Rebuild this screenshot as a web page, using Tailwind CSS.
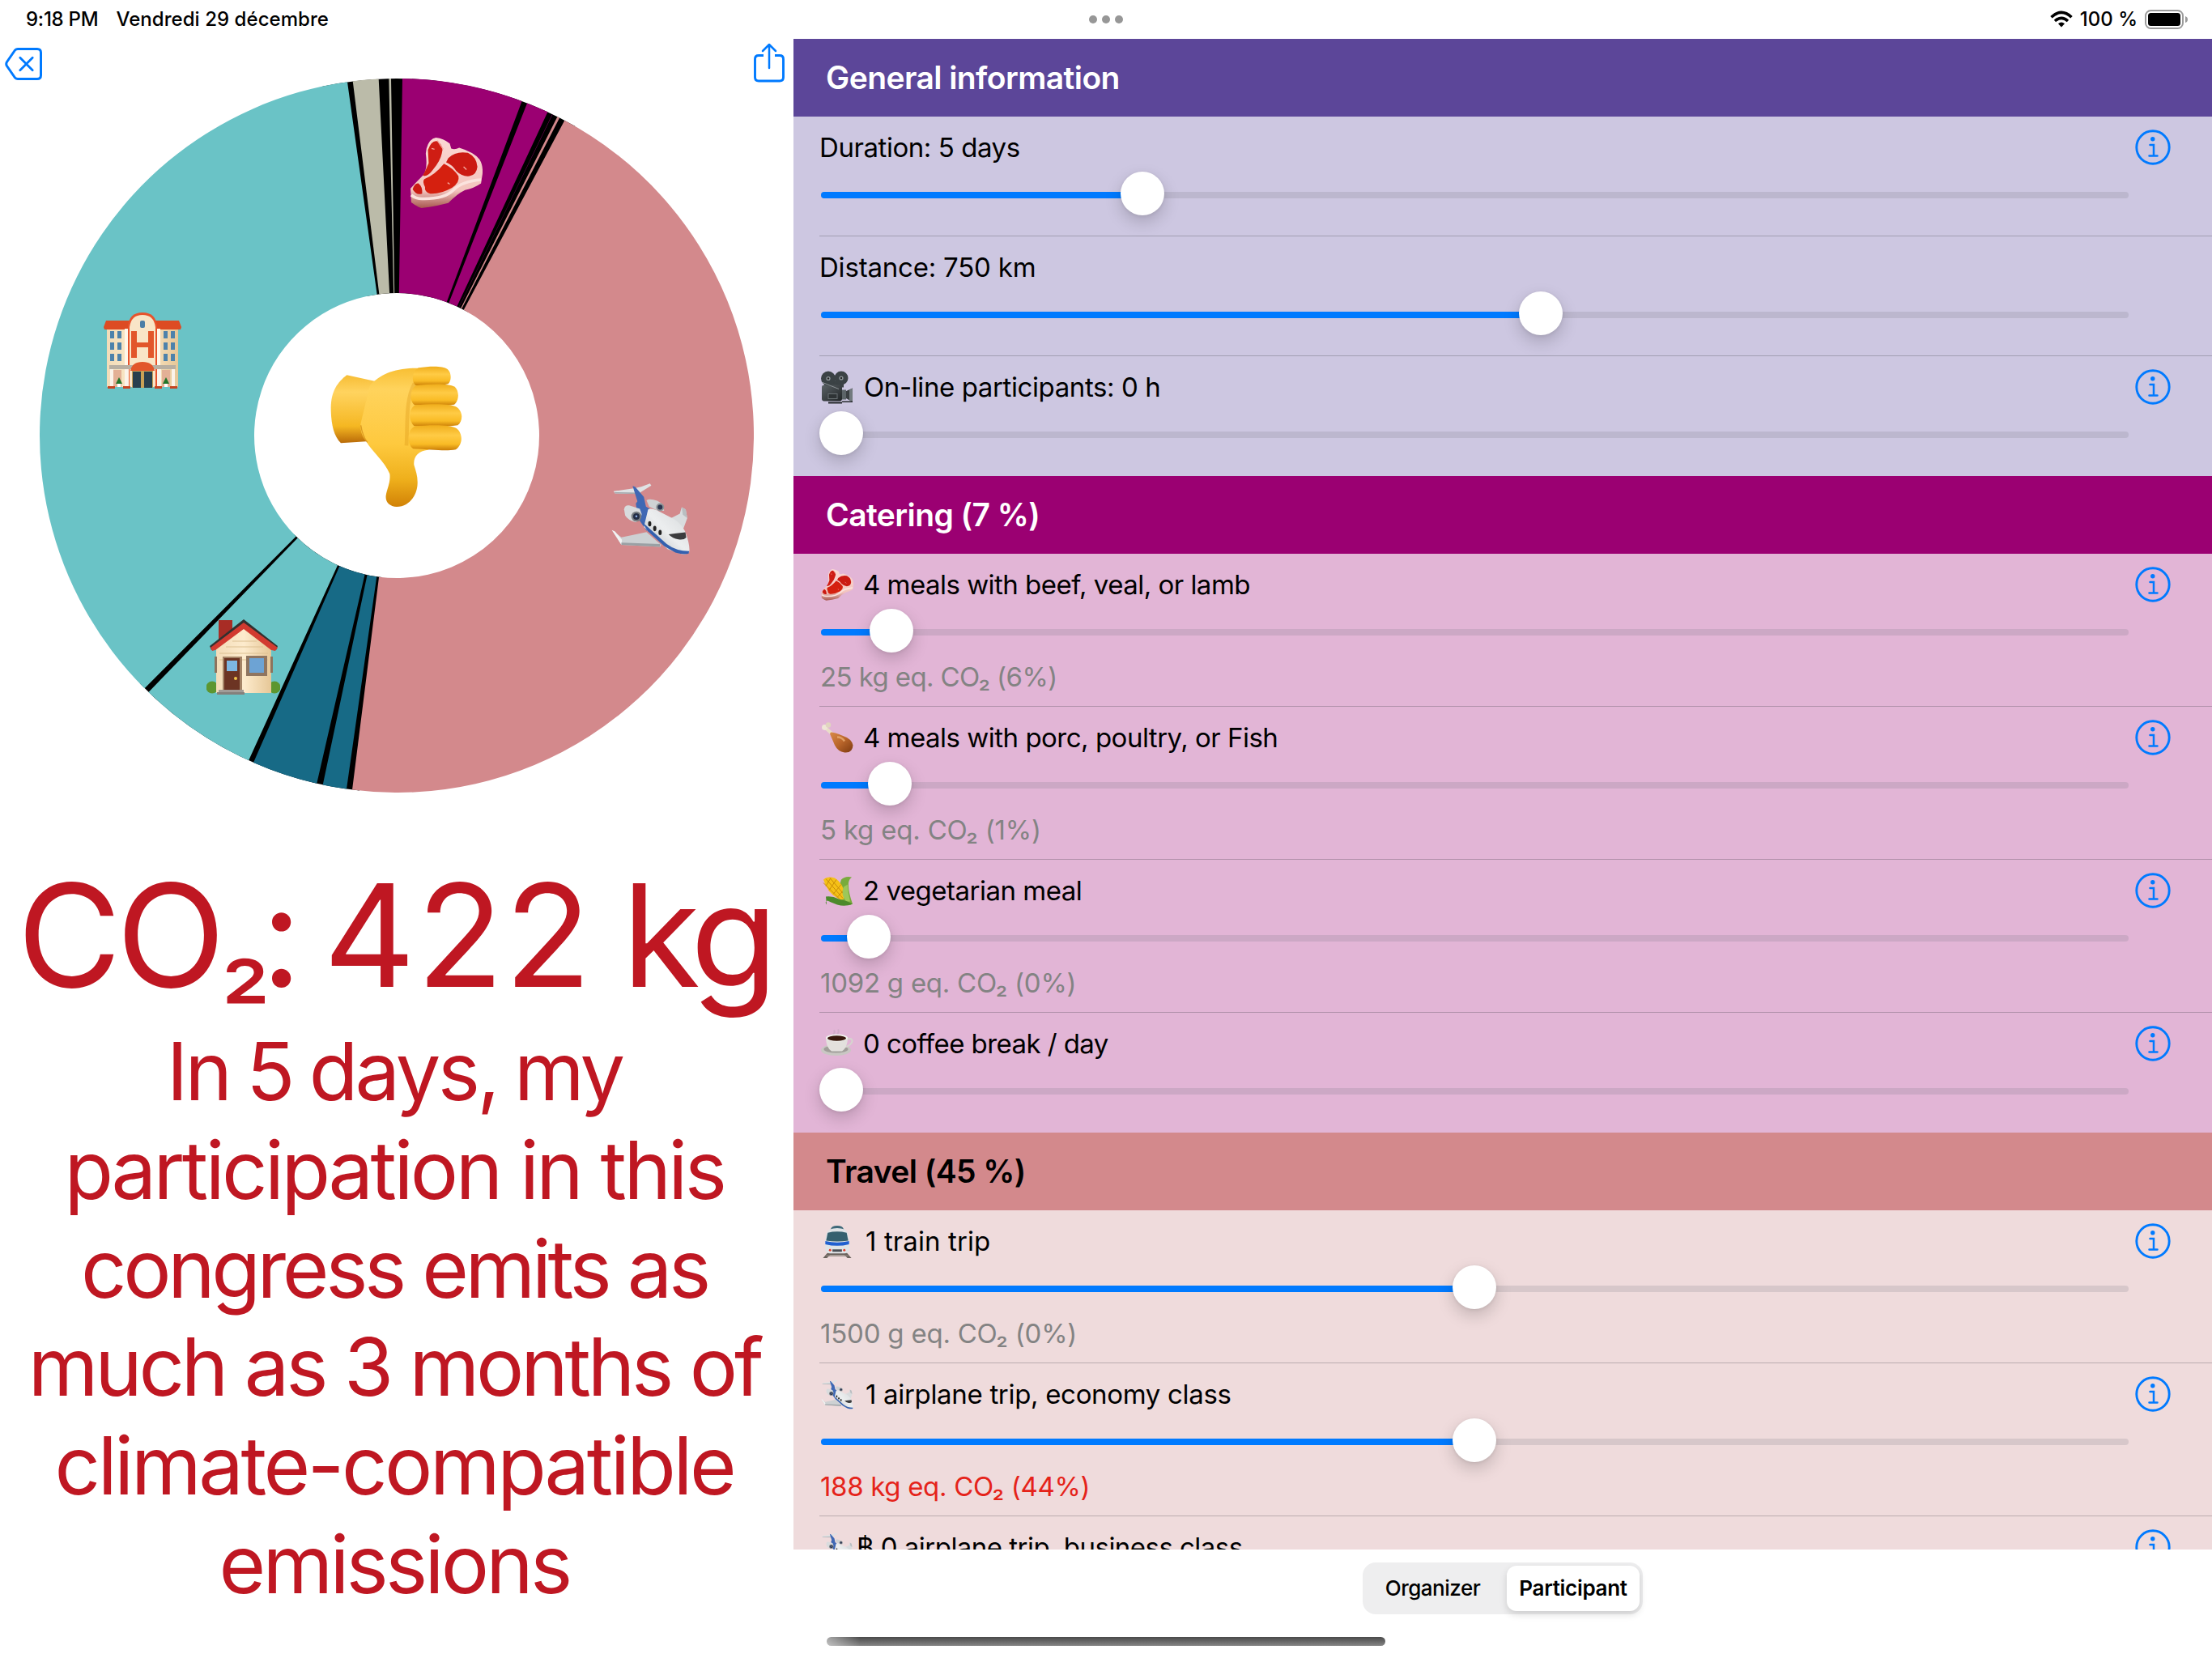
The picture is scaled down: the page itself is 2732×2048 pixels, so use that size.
<!DOCTYPE html>
<html lang="en">
<head>
<meta charset="utf-8">
<title>CO₂ congress calculator</title>
<script src="https://cdn.jsdelivr.net/npm/@tailwindcss/browser@4"></script>
</head>
<body class="w-[2732px] h-[2048px] overflow-hidden bg-white text-black font-['Inter',sans-serif]">

<!-- Emoji and icon symbols -->
<svg class="absolute size-0">
  <defs>
    <linearGradient id="skin" x1="0" y1="0" x2="0" y2="1"><stop offset="0" stop-color="#f8bf33"/><stop offset=".15" stop-color="#ffd35c"/><stop offset=".55" stop-color="#fec93e"/><stop offset=".8" stop-color="#efb01c"/><stop offset="1" stop-color="#d18206"/></linearGradient>
    <linearGradient id="finger" x1="0" y1="0" x2="0" y2="1"><stop offset="0" stop-color="#f0ae1c"/><stop offset=".4" stop-color="#ffcb45"/><stop offset=".75" stop-color="#f9bb25"/><stop offset="1" stop-color="#c97c05"/></linearGradient>
    <linearGradient id="cuff" x1="0" y1="0" x2="0" y2="1"><stop offset="0" stop-color="#f7bd35"/><stop offset=".25" stop-color="#ffd35f"/><stop offset=".75" stop-color="#f5b722"/><stop offset="1" stop-color="#b96a08"/></linearGradient>
    <linearGradient id="fat" x1="0" y1="0" x2="0" y2="1"><stop offset="0" stop-color="#fbd9d4"/><stop offset=".75" stop-color="#f3c4bd"/><stop offset="1" stop-color="#a8564f"/></linearGradient>
    <linearGradient id="body" x1="0" y1="1" x2="1" y2="0"><stop offset="0" stop-color="#aeb4b8"/><stop offset=".5" stop-color="#eceeef"/><stop offset="1" stop-color="#d5d8da"/></linearGradient>
    <linearGradient id="wall" x1="0" y1="0" x2="1" y2="0"><stop offset="0" stop-color="#f3dcb8"/><stop offset=".5" stop-color="#fdebcd"/><stop offset="1" stop-color="#e6c797"/></linearGradient>
    <linearGradient id="leg" x1="0" y1="0" x2="1" y2="1"><stop offset="0" stop-color="#d98b4a"/><stop offset=".5" stop-color="#b9652a"/><stop offset="1" stop-color="#7c3a10"/></linearGradient>
    <linearGradient id="cam" x1="0" y1="0" x2="1" y2="1"><stop offset="0" stop-color="#5b6266"/><stop offset="1" stop-color="#202426"/></linearGradient>
  </defs>
  <symbol id="thumb" viewBox="20 35 495 525">
    <path d="M84 69C50 95 24 130 25 195C26 250 35 295 62 321L156 315L190 92Z" fill="url(#cuff)"/>
    <path d="M170 106C210 65 262 42 350 43L400 60L420 330L384 346C350 350 330 370 333 402C340 425 347 445 346 470C345 515 315 557 269 557C242 555 226 540 229 515C233 490 247 465 243 435C225 390 175 350 156 315C140 295 134 275 135 250Z" fill="url(#skin)"/>
    <path d="M335 100C300 160 310 260 305 330" stroke="#d88f0c" stroke-width="14" opacity=".3" fill="none"/>
    <path d="M136 255C140 280 146 300 160 318" stroke="#c67c0a" stroke-width="4" opacity=".6" fill="none"/>
    <path d="M350 42C390 36 440 34 457 47C473 60 472 90 460 101C430 110 380 108 340 108C322 95 325 55 350 42Z" fill="url(#finger)"/>
    <path d="M340 108C390 101 460 99 484 112C502 128 500 165 482 178C440 184 380 183 335 180C315 165 317 120 340 108Z" fill="url(#finger)"/>
    <path d="M338 180C390 176 465 172 492 188C515 205 515 240 495 255C450 262 380 260 335 258C311 240 312 195 338 180Z" fill="url(#finger)"/>
    <path d="M335 259C380 255 460 250 490 266C515 285 515 325 488 345C450 352 400 345 330 342C306 325 307 272 335 259Z" fill="url(#finger)"/>
  </symbol>
  <symbol id="steak" viewBox="0 0 100 98">
    <path d="M23 15Q27 1 36 0Q46 1 55 8L57 15Q62 17 68 14Q88 20 96 30Q101 38 100 50L98 63Q88 70 76 72Q64 78 53 90Q34 95 16 97Q8 94 2 89L1 70Q8 62 18 52Q25 44 22 22Z" fill="url(#fat)"/>
    <path d="M25 17Q30 3 38 5Q48 12 44 22Q42 32 32 44Q24 55 18 52Q22 45 26 35Z" fill="#cf1d14"/>
    <path d="M53 28Q64 18 80 21Q92 27 93 40Q92 51 82 53Q72 54 64 46Q58 37 50 34Z" fill="#cb1a12"/>
    <path d="M47 36Q60 42 67 53Q69 62 58 69Q42 78 28 77Q20 75 21 68Q17 60 20 57Q34 52 47 36Z" fill="#d5200f"/>
    <path d="M4 71Q7 62 12 63Q18 68 17 77Q9 80 4 71Z" fill="#cb1a12"/>
    <path d="M38 4L46 16M74 40l4 4M30 15l4 1M52 62l3 2" stroke="#f6a79e" stroke-width="1.5"/>
    <path d="M2 79Q9 85 20 84Q48 84 60 72Q72 60 98 58" stroke="#fbe3de" stroke-width="4" fill="none"/>
  </symbol>
  <symbol id="plane" viewBox="28 32 296 272">
    <path d="M36 64L116 53L140 47L173 35L178 43L139 67L134 75L42 72Z" fill="#dfe2e4"/>
    <path d="M42 72L134 75L136 69L40 68Z" fill="#a3a9ad"/>
    <path d="M108 44L118 48L150 85L158 122L172 130L190 200L160 212L128 165L120 110L126 102Z" fill="#3f68b4"/>
    <path d="M160 98Q172 90 200 100L220 112L226 138L200 136L170 122Z" fill="#cfd2d4"/>
    <circle cx="211" cy="124" r="15" fill="#8d9296"/><circle cx="211" cy="124" r="9" fill="#2b3550"/>
    <path d="M30 210L66 237L160 217L215 265L212 273L66 265Z" fill="#cdd1d3"/>
    <path d="M30 210L42 215L68 246L66 265Z" fill="#f2f3f3"/><path d="M66 265L212 273L210 262L66 257Z" fill="#9aa0a4"/>
    <path d="M252 165L285 148L292 124L307 132L313 165L298 205L285 195Z" fill="#d9dcde"/>
    <path d="M292 124L307 132L313 165L296 152Z" fill="#b9bec1"/>
    <path d="M166 132Q176 126 200 136L262 168Q300 190 312 235Q324 275 320 292Q314 304 290 299L240 282L205 250L150 198Z" fill="url(#body)"/>
    <path d="M142 178L180 212L236 262Q270 288 320 289L318 298Q300 304 268 294L226 270L165 214Z" fill="#3460ae"/>
    <path d="M76 132Q78 115 95 117L135 130L142 150Q140 176 118 180Q90 172 80 155Z" fill="#d8dbdd"/>
    <circle cx="122" cy="159" r="19" fill="#777c80"/><circle cx="122" cy="159" r="12" fill="#222c44"/><circle cx="122" cy="158" r="4" fill="#8fb1e8"/>
    <ellipse cx="172" cy="186" rx="6" ry="10" fill="#222"/><ellipse cx="191" cy="204" rx="6" ry="10" fill="#222"/><ellipse cx="211" cy="219" rx="6" ry="10" fill="#222"/>
    <path d="M243 226Q270 222 306 218L309 238Q300 248 280 245Q258 243 243 226Z" fill="#3c3c3e"/>
  </symbol>
  <symbol id="hotel" viewBox="0 0 96 94">
    <rect x="4" y="14" width="88" height="78" fill="url(#wall)"/>
    <path d="M3 10H93L96 18L95 21H1L0 18Z" fill="#dd4b23"/>
    <path d="M30 92V18Q31 0 48 0Q65 0 66 18V92Z" fill="#e8522b"/>
    <path d="M32 92V18Q34 3 48 3Q62 3 64 18V92Z" fill="#f9e5c7"/>
    <path d="M26 20h4v72h-4zM66 20h4v72h-4z" fill="#fff7ea"/>
    <rect x="45" y="10" width="6" height="9" rx="2" fill="#4c7ea6"/>
    <path d="M34 23h7v14h14v-14h7v33h-7v-13h-14v13h-7z" fill="#e2562b"/>
    <g fill="#4d82ab"><path d="M8 23h5v9h-5zM17 23h5v9h-5zM8 37h5v9h-5zM17 37h5v9h-5zM8 51h5v9h-5zM17 51h5v9h-5z"/><path d="M74 23h5v9h-5zM83 23h5v9h-5zM74 37h5v9h-5zM83 37h5v9h-5zM74 51h5v9h-5zM83 51h5v9h-5z"/></g>
    <rect x="7" y="65" width="82" height="5" fill="#b8afa2"/>
    <path d="M12 71h10v21h-10zM72 71h10v21h-10z" fill="#e3b096"/>
    <path d="M8 70h4v22h-4zM26 70h5v22h-5zM66 70h5v22h-5zM84 70h4v22h-4z" fill="#fbf3ea"/>
    <path d="M33 72Q35 61 48 61Q61 61 63 72Z" fill="#e2562b"/>
    <rect x="35" y="72" width="26" height="21" fill="#c8a256"/><path d="M36 73h10v20h-10zM50 73h10v20h-10z" fill="#28404e"/>
    <path d="M19 80l4 8h-8zM77 80l4 8h-8z" fill="#23762b"/><path d="M17 88h4v4h-4zM75 88h4v4h-4z" fill="#fff"/>
    <path d="M5 91h9v3h-9zM24 91h9v3h-9zM63 91h9v3h-9zM82 91h9v3h-9z" fill="#c74421"/>
  </symbol>
  <symbol id="house" viewBox="0 0 91 93">
    <circle cx="7" cy="84" r="7.500" fill="#5c9630"/><circle cx="84" cy="84" r="7.500" fill="#5c9630"/>
    <rect x="15" y="1" width="17" height="30" fill="#a82c25"/>
    <path d="M12 35L46 6L80 35V91H12Z" fill="url(#wall)"/>
    <path d="M16 42h60M16 50h60M24 34h46M32 27h30" stroke="#dcc092" stroke-width="1"/>
    <path d="M46 0L88 33L86 38L46 8L6 38L4 33Z" fill="#33302f"/>
    <path d="M46 4L88 35L85 39L80 38L46 12L11 38L7 39L5 35Z" fill="#d23a30"/>
    <path d="M20 46h24v42h-24z" fill="#a48366"/><path d="M22 48h19v40h-19z" fill="#6c3423"/><path d="M25 51h13v13h-13z" fill="#7db7e2"/><circle cx="36" cy="73" r="2" fill="#f1c34a"/>
    <path d="M10 46h3v20h-3zM79 46h3v20h-3z" fill="#8d735d"/>
    <path d="M49 45h26v25h-26z" fill="#8f7560"/><path d="M53 48h18v18h-18z" fill="#6da3d4"/>
    <path d="M15 87h31v3h-31z" fill="#a19c98"/><path d="M13 90h34v3h-34z" fill="#85807c"/>
  </symbol>
  <symbol id="camera" viewBox="0 0 40 40">
    <path d="M30 25L39 21V38L30 33Z" fill="#3a3f42"/><path d="M35 23l4-2v17l-4-2z" fill="#727a7e"/>
    <path d="M4 12h24v8h-24z" fill="#3b4245"/>
    <rect x="1" y="17" width="25" height="20" rx="3" fill="url(#cam)"/><path d="M26 23h5v12h-5z" fill="#5c6468"/>
    <circle cx="9" cy="9" r="9" fill="#3b4245"/><circle cx="25" cy="8.500" r="8.500" fill="#3b4245"/>
    <circle cx="9" cy="9" r="2.600" fill="#8f979a"/><circle cx="25" cy="8.500" r="2.600" fill="#8f979a"/><circle cx="9" cy="9" r="1.200" fill="#222"/><circle cx="25" cy="8.500" r="1.200" fill="#222"/>
    <rect x="9" y="28" width="11" height="6" fill="#2e3335" stroke="#6a7174"/><path d="M9 38h17v2h-17zM26 37h13v1.500h-13z" fill="#24282a"/>
    <path d="M2 14l20 8" stroke="#8b9194" stroke-width="1"/>
  </symbol>
  <symbol id="drumstick" viewBox="0 0 40 40">
    <path d="M5 7L17 18" stroke="#e9ddc8" stroke-width="4"/><circle cx="4.500" cy="7" r="3.400" fill="#efe6d6"/><circle cx="9" cy="4" r="3.200" fill="#e1d5c0"/>
    <path d="M12 13Q17 13 26 17Q38 21 39.500 29Q39 39 29 38Q21 37 17 29Q14 22 11 15Z" fill="url(#leg)"/>
    <path d="M20 19Q26 19 29 24" stroke="#efb57c" stroke-width="2.500" fill="none" opacity=".7"/>
  </symbol>
  <symbol id="corn" viewBox="0 0 40 40">
    <path d="M25 6Q30 1 38 3Q33 7 34 14Q34 22 39 36Q34 39 28 36L20 22Z" fill="#79ab3c"/>
    <path d="M3 6Q8 1 17 4Q27 10 30 25Q29 33 22 30Q8 23 3 6Z" fill="#f5c117"/>
    <path d="M6 5L27 29M11 4L29 25M3 10L23 30M6 14L12 4M10 19L19 6M15 24L25 12M20 28L29 18" stroke="#c98c08" stroke-width="1"/>
    <path d="M28 15Q24 24 31 33L36 33Q33 22 33 12Z" fill="#9cc75a"/>
    <path d="M6 27Q14 26 22 30Q32 32 39 36Q30 40 20 37Q12 34 8 32Q4 33 7 37" fill="#4c8a2b"/>
  </symbol>
  <symbol id="coffee" viewBox="0 0 40 40">
    <path d="M15 8Q18 6 16 3M20 8Q23 5 21 2" stroke="#c9a9c3" stroke-width="2" fill="none" opacity=".7"/>
    <ellipse cx="18.500" cy="27.500" rx="18.500" ry="7" fill="#c9c7c3"/><ellipse cx="18.500" cy="26.500" rx="15" ry="4.500" fill="#a19e9a"/>
    <path d="M31 14Q39 12 38.500 17Q37 22 29 24" stroke="#d6d4cf" stroke-width="2.200" fill="none"/>
    <path d="M6 12H33Q33 24 26 29H13Q6 24 6 12Z" fill="#e3e1dd"/>
    <ellipse cx="19.500" cy="12.500" rx="13.500" ry="4.500" fill="#f2f1ee"/><ellipse cx="19.500" cy="13" rx="11.500" ry="3.300" fill="#38180c"/>
  </symbol>
  <symbol id="train" viewBox="0 0 40 42">
    <path d="M8 35L2 42H7L11 38H29L33 42H38L32 35Z" fill="#6b625c"/><path d="M6 39h28" stroke="#8c837c" stroke-width="1.500"/>
    <path d="M12 5Q13 1 20 1Q27 1 28 5L30 8H10Z" fill="#3e6878"/>
    <path d="M10 6Q20 2 30 6Q35 10 35 22V32Q34 36 29 36H11Q6 36 5 32V22Q5 10 10 6Z" fill="#dfe3e6"/>
    <path d="M8 10Q20 7 32 10L34 20Q20 22 6 20Z" fill="#35606f"/>
    <path d="M5 20.500Q20 24 35 20.500V24.500Q20 28.500 5 24.500Z" fill="#1f5fd0"/>
    <path d="M14 31h12v3h-12z" fill="#4a4f55"/><circle cx="11" cy="32" r="1.500" fill="#e0412e"/><circle cx="29" cy="32" r="1.500" fill="#e0412e"/>
  </symbol>
  <symbol id="info" viewBox="0 0 44 44">
    <circle cx="22" cy="22" r="20.200" fill="none" stroke="#007aff" stroke-width="2.900"/>
    <circle cx="21.800" cy="11.800" r="2.700" fill="#007aff"/>
    <path d="M18.500 19H23V32.300M17.500 32.500H27.500" fill="none" stroke="#007aff" stroke-width="2.500" stroke-linecap="round"/>
  </symbol>
</svg>

<div class="flex flex-col w-full h-full">
  <!-- Status bar -->
  <header class="h-12 shrink-0 grid grid-cols-3 items-center text-[24px] leading-[30px] font-medium">
    <div class="flex gap-[22px] pl-8">
      <span class="tracking-[-0.25px]">9:18 PM</span>
      <span class="tracking-[0.05px]">Vendredi 29 décembre</span>
    </div>
    <div class="flex justify-center gap-[6px]">
      <span class="size-[10px] rounded-full bg-[#979797]"></span><span class="size-[10px] rounded-full bg-[#979797]"></span><span class="size-[10px] rounded-full bg-[#979797]"></span>
    </div>
    <div class="flex justify-end items-center pr-[29px]">
      <svg class="w-7 h-[22px] mr-[9px]" viewBox="0 0 28 22" fill="none" stroke="#000" stroke-width="3.600"><path d="M1.500 8.200Q14-3.400 26.500 8.200"/><path d="M6 13Q14 5.800 22 13"/><path d="M10 16.200Q14 13 18 16.200L14 20.600Z" fill="#000" stroke="none"/></svg>
      <span class="mr-[9px]">100 %</span>
      <svg class="w-[54px] h-6" viewBox="0 0 54 24"><rect x="1" y="1" width="46" height="22" rx="6.500" fill="none" stroke="#9b9b9b" stroke-width="2"/><rect x="4" y="4" width="40" height="16" rx="3.500"/><path d="M50 8Q53 9 53 12T50 16Z" fill="#9b9b9b"/></svg>
    </div>
  </header>

  <main class="flex flex-1 min-h-0">
    <!-- Summary pane -->
    <section class="w-[980px] shrink-0 flex flex-col items-center text-[#bf1722]">
      <div class="h-[49px] w-full shrink-0 flex justify-between items-start pl-[6px] pr-[11px]">
        <svg class="w-[46px] h-10 mt-[10.500px] shrink-0" viewBox="0 0 46 40" fill="none" stroke="#007aff" stroke-width="3" stroke-linejoin="round" stroke-linecap="round"><path d="M16 1.500H40Q44.500 1.500 44.500 6V34Q44.500 38.500 40 38.500H16Q14 38.500 12.500 37L2.500 22.500Q1 20 2.500 17.500L12.500 3Q14 1.500 16 1.500Z"/><path d="M18.800 12.300L34.200 27.700M34.200 12.300L18.800 27.700" stroke-width="2.800"/></svg>
        <svg class="w-[38px] h-[49px] mt-[5px] shrink-0" viewBox="0 0 38 49" fill="none" stroke="#007aff" stroke-width="2.900" stroke-linejoin="round" stroke-linecap="round"><path d="M12 15.500H6Q1.500 15.500 1.500 20V42.500Q1.500 47 6 47H32Q36.500 47 36.500 42.500V20Q36.500 15.500 32 15.500H26" stroke-linecap="butt"/><path d="M19 31V2.500M11 10L19 2L27 10" stroke-width="2.500"/></svg>
      </div>
      <svg id="pie" class="size-[882px] shrink-0" viewBox="49 97 882 882">
        <g id="slices"></g>
        <use href="#steak" x="506" y="170" width="90" height="88"/>
        <use href="#hotel" x="128" y="386" width="96" height="94"/>
        <use href="#plane" x="755" y="596" width="97.500" height="90"/>
        <use href="#house" x="255" y="765" width="91" height="93"/>
        <use href="#thumb" x="407" y="452" width="165" height="175"/>
      </svg>
      <h1 class="mt-[76px] mr-[6px] h-[200px] text-[176px] leading-[200px] whitespace-nowrap [word-spacing:-14px]"><span class="tracking-[-6px]">CO</span><span class="text-[140px] leading-[100px] tracking-[-12px]">₂</span><span class="tracking-[-4.500px]">: </span><span class="tracking-[1.200px]">422 </span><span class="tracking-[-8px]">kg</span></h1>
      <p class="mt-[8px] mr-[6px] text-[99px] leading-[121.800px] whitespace-nowrap text-center">
        <span class="tracking-[-3.800px] [word-spacing:-3px]">In 5 days, my</span><br><span class="tracking-[-3.550px]">participation in this</span><br><span class="tracking-[-4.400px]">congress emits as</span><br><span class="tracking-[-4.200px]">much as 3 months of</span><br><span class="tracking-[-3.400px]">climate-compatible</span><br><span class="tracking-[-3.800px]">emissions</span>
      </p>
    </section>

    <!-- Settings pane -->
    <section class="flex-1 flex flex-col min-w-0">
      <div id="list" class="h-[1866px] shrink-0 overflow-hidden"></div>
      <div class="flex-1 flex justify-center items-start pt-4">
        <div class="w-[346px] h-16 rounded-2xl bg-[#eeeeef] p-1 flex text-[26px] leading-[32px]">
          <div class="w-[165px] mr-[9px] flex items-center justify-center tracking-[-0.500px] font-medium">Organizer</div>
          <div class="w-[164px] rounded-xl bg-white shadow-[0_4px_10px_rgba(0,0,0,0.14)] flex items-center justify-center tracking-[-0.300px] font-semibold">Participant</div>
        </div>
      </div>
    </section>
  </main>
</div>

<!-- Home indicator -->
<div class="absolute left-[1021px] top-[2022px] w-[690px] h-[11px] rounded-full bg-[linear-gradient(90deg,rgba(255,255,255,0.5),transparent_6%),linear-gradient(#4a4a4a,#858585)]"></div>

<script>
  // Ring slices: [start°, end°, colour], clockwise from the top; gaps stay black.
  const slices = [
    [-12, 30, '#000'], [186, 226, '#000'],
    [0.91, 20.52, '#9b0072'], [21.42, 25.01, '#9b0072'], [25.83, 25.88, '#9b0072'],
    [26.73, 27.13, '#d3898c'], [28.04, 187.16, '#d3898c'],
    [188.08, 191.95, '#176a86'], [192.94, 203.66, '#176a86'],
    [204.5, 224.04, '#6ac3c6'], [224.93, 352.05, '#6ac3c6'],
    [352.93, 357.1, '#bbbba9'], [358.74, 359.09, '#bbbba9'],
  ];
  const pt = (r, a) => `${(490 + r * Math.sin(a * Math.PI / 180)).toFixed(2)} ${(538 - r * Math.cos(a * Math.PI / 180)).toFixed(2)}`;
  document.getElementById('slices').innerHTML = slices.map(([a, b, c]) => {
    const big = b - a > 180 ? 1 : 0;
    return `<path fill="${c}" d="M${pt(441, a)}A441 441 0 ${big} 1 ${pt(441, b)}L${pt(176, b)}A176 176 0 ${big} 0 ${pt(176, a)}Z"/>`;
  }).join('');

  // knob: centre of the slider knob, in px from the left end of the list column
  const sections = [
    { title: 'General information', head: 'bg-[#5c4699] text-white', body: 'bg-[#cdc7e1]', rows: [
      { text: 'Duration: 5 days', fit: 'tracking-[-0.440px]', knob: 399, info: true },
      { text: 'Distance: 750 km', fit: 'tracking-[-0.200px]', knob: 891 },
      { icon: 'camera', text: 'On-line participants: 0 h', fit: 'tracking-[-0.400px]', knob: 27, info: true } ] },
    { title: 'Catering (7 %)', head: 'bg-[#9b0072] text-white', body: 'bg-[#e2b5d6]', rows: [
      { icon: 'steak', text: '4 meals with beef, veal, or lamb', fit: 'tracking-[-0.520px] -ml-px', knob: 89, value: '25 kg eq. CO₂ (6%)', vfit: 'tracking-[-0.600px]', info: true },
      { icon: 'drumstick', text: '4 meals with porc, poultry, or Fish', fit: 'tracking-[-0.500px] -ml-px', knob: 87, value: '5 kg eq. CO₂ (1%)', vfit: 'tracking-[-0.200px]', info: true },
      { icon: 'corn', text: '2 vegetarian meal', fit: 'tracking-[-0.500px] -ml-px', knob: 61, value: '1092 g eq. CO₂ (0%)', vfit: 'tracking-[-0.250px]', info: true },
      { icon: 'coffee', text: '0 coffee break / day', fit: 'tracking-[-0.570px] -ml-px', knob: 27, info: true } ] },
    { title: 'Travel (45 %)', head: 'bg-[#d3898c] text-black', body: 'bg-[#efdbdc]', rows: [
      { icon: 'train', text: '1 train trip', fit: 'tracking-[0.100px] ml-[2px]', knob: 809, value: '1500 g eq. CO₂ (0%)', vfit: 'tracking-[-0.220px]', info: true },
      { icon: 'plane', text: '1 airplane trip, economy class', fit: 'tracking-[-0.320px] ml-[2px]', knob: 809, value: '188 kg eq. CO₂ (44%)', vfit: 'tracking-[-0.320px]', tone: 'text-[#e5231a]', info: true },
      { icon: 'plane', text: '฿ 0 airplane trip, business class', fit: 'tracking-[-0.530px] -ml-px', knob: 27, tight: true, info: true } ] },
  ];
  const row = (r, last) => `
    <div class="ml-8 pt-[18px] ${r.value ? 'h-[189px]' : 'h-[148px]'} ${last ? '' : 'border-b border-[#3c3c43]/29'}">
      <div class="flex items-center h-10 pr-[51px] text-[33px] leading-[40px] whitespace-nowrap">
        ${r.icon ? `<svg class="w-10 h-[41px] ml-[2px] shrink-0 ${r.tight ? 'mr-[5px]' : 'mr-[13px]'}"><use href="#${r.icon}"/></svg>` : ''}
        <span class="${r.fit}">${r.text}</span>
        ${r.info ? '<svg class="size-11 ml-auto shrink-0"><use href="#info"/></svg>' : ''}
      </div>
      <div class="relative h-[75px] pt-[35px] pl-[2px] pr-[103px]">
        <div class="h-2 rounded-full bg-[#787880]/20"><div class="h-2 rounded-full bg-[#007aff]" style="width:${r.knob > 27 ? r.knob : 0}px"></div></div>
        <div class="absolute top-[10px] -ml-[27px] size-[54px] rounded-full bg-white shadow-[0_8px_20px_rgba(0,0,0,0.18),0_1px_4px_rgba(0,0,0,0.08)]" style="left:${r.knob}px"></div>
      </div>
      ${r.value ? `<div class="-mt-px pl-px text-[33px] leading-[40px] whitespace-nowrap ${r.tone || 'text-[#838383]'}"><span class="${r.vfit}">${r.value}</span></div>` : ''}
    </div>`;
  document.getElementById('list').innerHTML = sections.map(s => `
    <div class="h-24 pl-10 flex items-center text-[39px] leading-[48px] font-semibold tracking-[-0.570px] whitespace-nowrap ${s.head}">${s.title}</div>
    <div class="${s.body}">${s.rows.map((r, i) => row(r, i === s.rows.length - 1)).join('')}</div>`).join('');
</script>
</body>
</html>
